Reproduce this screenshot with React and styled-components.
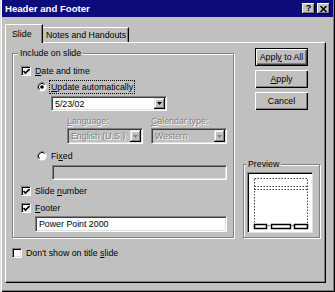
import React from "react";
import styled, { createGlobalStyle } from "styled-components";

const GlobalStyle = createGlobalStyle`
  html, body {
    margin: 0;
    padding: 0;
    background: #c0c0c0;
  }
  body {
    font-family: "Liberation Sans", Arial, sans-serif;
    font-size: 8.8px;
    color: #000;
  }
`;

const Window = styled.div`
  width: 335px;
  height: 292px;
  box-sizing: border-box;
  background: #c0c0c0;
  padding: 0 2px 2px 2px;
  display: flex;
  flex-direction: column;
  box-shadow: inset 1px 0 0 #dfdfdf, inset 2px 0 0 #fff, inset -1px -1px 0 #000,
    inset -2px -2px 0 #808080;
`;

const TitleBar = styled.div`
  height: 17px;
  flex: none;
  background: #0c0c7c;
  display: flex;
  align-items: center;
  justify-content: space-between;
  padding: 0 3px 0 3px;
`;

const TitleText = styled.div`
  color: #fff;
  font-weight: bold;
  font-size: 9.6px;
`;

const CaptionButtons = styled.div`
  display: flex;
  gap: 2px;
`;

const CaptionButton = styled.div`
  width: 13px;
  height: 11px;
  box-sizing: border-box;
  background: #c0c0c0;
  display: flex;
  align-items: center;
  justify-content: center;
  font-weight: bold;
  font-size: 9px;
  line-height: 1;
  box-shadow: inset -1px -1px 0 #000, inset 1px 1px 0 #fff, inset -2px -2px 0 #808080;
`;

const Body = styled.div`
  flex: 1;
  display: flex;
  flex-direction: column;
  padding: 7px 7px 7px 3px;
`;

const TabStrip = styled.div`
  display: flex;
  align-items: flex-end;
  height: 18px;
`;

const Tab = styled.div`
  box-sizing: border-box;
  width: ${(p) => p.$w}px;
  height: ${(p) => (p.$active ? "19px" : "15px")};
  margin-bottom: ${(p) => (p.$active ? "-1px" : "0")};
  padding-left: ${(p) => (p.$active ? "6px" : "3px")};
  display: flex;
  align-items: center;
  background: #c0c0c0;
  border-top: 1px solid #fff;
  border-left: ${(p) => (p.$active ? "1px solid #fff" : "none")};
  border-right: 1px solid #000;
  box-shadow: inset -1px 0 0 #808080;
  position: relative;
  z-index: ${(p) => (p.$active ? 1 : 0)};
`;

const Panel = styled.div`
  flex: 1;
  box-sizing: border-box;
  border-top: 1px solid #fff;
  border-left: 1px solid #fff;
  border-right: 1px solid #000;
  border-bottom: 1px solid #000;
  box-shadow: inset -1px -1px 0 #808080;
  padding: 5px 5px 0 6px;
  display: flex;
  flex-direction: column;
`;

const Columns = styled.div`
  display: flex;
  align-items: stretch;
`;

const Group = styled.div`
  box-sizing: border-box;
  width: ${(p) => p.$w}px;
  height: ${(p) => (p.$h ? `${p.$h}px` : "auto")};
  margin-top: ${(p) => p.$mt || 0}px;
  padding-bottom: ${(p) => p.$pb || 0}px;
  border: 1px solid #808080;
  box-shadow: 1px 1px 0 #fff, inset 1px 1px 0 #fff;
  display: flex;
  flex-direction: column;
`;

const Legend = styled.div`
  align-self: flex-start;
  height: 12px;
  line-height: 12px;
  margin: -7px 0 0 ${(p) => p.$ml}px;
  padding: 0 2px;
  background: #c0c0c0;
`;

const CheckRow = styled.div`
  display: flex;
  align-items: center;
  height: 12px;
  margin: ${(p) => p.$mt}px 0 0 ${(p) => p.$ml}px;
  gap: ${(p) => p.$gap || 4}px;
`;

const Box = styled.div`
  width: 10px;
  height: 10px;
  box-sizing: border-box;
  background: #fff;
  border: 1px solid;
  border-color: #808080 #fff #fff #808080;
  box-shadow: inset 1px 1px 0 #000, inset -1px -1px 0 #dfdfdf;
  display: flex;
  align-items: center;
  justify-content: center;
`;

const FocusLabel = styled.span`
  padding: 1px 1px;
  outline: 1px dotted #000;
  outline-offset: 0;
`;

const Field = styled.div`
  box-sizing: border-box;
  width: ${(p) => p.$w}px;
  height: ${(p) => p.$h}px;
  margin: ${(p) => p.$mt || 0}px 0 0 ${(p) => p.$ml || 0}px;
  background: ${(p) => (p.$disabled ? "#c0c0c0" : "#fff")};
  color: ${(p) => (p.$disabled ? "#808080" : "#000")};
  text-shadow: ${(p) => (p.$disabled ? "1px 1px 0 #fff" : "none")};
  border: 1px solid;
  border-color: #808080 #fff #fff #808080;
  box-shadow: inset 1px 1px 0 #404040, inset -1px -1px 0 #dfdfdf;
  padding: 1px 1px 1px 3px;
  display: flex;
  align-items: center;
  flex: none;
`;

const FieldText = styled.span`
  flex: 1;
  white-space: nowrap;
  overflow: hidden;
`;

const DropButton = styled.div`
  width: 11px;
  align-self: stretch;
  box-sizing: border-box;
  background: #c0c0c0;
  display: flex;
  align-items: center;
  justify-content: center;
  box-shadow: inset -1px -1px 0 #000, inset 1px 1px 0 #dfdfdf, inset -2px -2px 0 #808080,
    inset 2px 2px 0 #fff;
`;

const PairRow = styled.div`
  display: flex;
  gap: 8px;
  margin: ${(p) => p.$mt}px 0 0 54px;
  height: ${(p) => p.$h}px;
  align-items: center;
`;

const DisabledLabel = styled.span`
  width: 76px;
  color: #808080;
  text-shadow: 1px 1px 0 #fff;
`;

const Side = styled.div`
  width: 77px;
  margin-left: 9px;
  display: flex;
  flex-direction: column;
  align-items: center;
  gap: 4px;
`;

const Button = styled.div`
  width: 53px;
  height: 18px;
  box-sizing: border-box;
  display: flex;
  align-items: center;
  justify-content: center;
  background: #c0c0c0;
  border: ${(p) => (p.$default ? "1px solid #000" : "none")};
  box-shadow: ${(p) =>
    p.$default
      ? "inset 1px 1px 0 #fff, inset -1px -1px 0 #404040, inset -2px -2px 0 #808080"
      : "inset 1px 1px 0 #fff, inset -1px -1px 0 #000, inset -2px -2px 0 #808080"};
`;

const PreviewGroup = styled(Group)`
  margin-top: auto;
`;

const Screen = styled.div`
  width: 66px;
  height: 61px;
  box-sizing: border-box;
  margin: 2px 0 0 3px;
  background: #fff;
  border: 1px solid;
  border-color: #808080 #dfdfdf #dfdfdf #808080;
  box-shadow: inset 1px 1px 0 #000;
  display: flex;
`;

const BottomRow = styled(CheckRow)`
  margin-top: 9px;
`;

const Check = () => (
  <svg width="7" height="7" viewBox="0 0 7 7">
    <path d="M0.5 3 L2.5 5 L6.5 1" stroke="#000" strokeWidth="1.6" fill="none" />
  </svg>
);

const Radio = ({ checked }) => (
  <svg width="10" height="10" viewBox="0 0 10 10">
    <circle cx="5" cy="5" r="4.5" fill="#fff" />
    <path d="M8.2 1.8 A4.5 4.5 0 0 0 1.8 8.2" stroke="#808080" strokeWidth="1" fill="none" />
    <path d="M7.5 2.5 A3.5 3.5 0 0 0 2.5 7.5" stroke="#000" strokeWidth="1" fill="none" />
    {checked && <circle cx="5" cy="5" r="1.8" fill="#000" />}
  </svg>
);

const Arrow = ({ color = "#000" }) => (
  <svg width="5" height="3" viewBox="0 0 5 3">
    <path d="M0 0 H5 L2.5 3 Z" fill={color} />
  </svg>
);

const Combo = ({ w, h, value, disabled, mt, ml }) => (
  <Field $w={w} $h={h} $disabled={disabled} $mt={mt} $ml={ml}>
    <FieldText>{value}</FieldText>
    <DropButton>
      <Arrow color={disabled ? "#808080" : "#000"} />
    </DropButton>
  </Field>
);

const SlideSketch = () => (
  <svg width="64" height="59" viewBox="0 0 64 59">
    <g stroke="#404040" strokeWidth="1" strokeDasharray="1.5 1.5" fill="none">
      <rect x="6.5" y="5.5" width="53" height="47" />
      <line x1="6.5" y1="13.5" x2="59.5" y2="13.5" />
      <line x1="6.5" y1="16.5" x2="59.5" y2="16.5" />
    </g>
    <g stroke="#000" strokeWidth="1.5" fill="#fff">
      <rect x="6.5" y="51.5" width="12" height="4" />
      <rect x="23.5" y="51.5" width="19" height="4" />
      <rect x="46.5" y="51.5" width="13" height="4" />
    </g>
  </svg>
);

export default function App() {
  return (
    <>
      <GlobalStyle />
      <Window>
        <TitleBar>
          <TitleText>Header and Footer</TitleText>
          <CaptionButtons>
            <CaptionButton>?</CaptionButton>
            <CaptionButton>
              <svg width="7" height="6" viewBox="0 0 7 6">
                <path d="M0.5 0 L6.5 6 M6.5 0 L0.5 6" stroke="#000" strokeWidth="1.5" />
              </svg>
            </CaptionButton>
          </CaptionButtons>
        </TitleBar>
        <Body>
          <TabStrip>
            <Tab $active $w={38}>Slide</Tab>
            <Tab $w={86}>Notes and Handouts</Tab>
          </TabStrip>
          <Panel>
            <Columns>
              <Group $w={222} $mt={5} $pb={5}>
                <Legend $ml={5}>Include on slide</Legend>
                <CheckRow $mt={6} $ml={8}>
                  <Box>
                    <Check />
                  </Box>
                  <span>
                    <u>D</u>ate and time
                  </span>
                </CheckRow>
                <CheckRow $mt={4} $ml={24} $gap={3}>
                  <Radio checked />
                  <FocusLabel>
                    <u>U</u>pdate automatically
                  </FocusLabel>
                </CheckRow>
                <Combo w={116} h={15} mt={3} ml={38} value="5/23/02" />
                <PairRow $mt={5} $h={10}>
                  <DisabledLabel>
                    <u>L</u>anguage:
                  </DisabledLabel>
                  <DisabledLabel>
                    <u>C</u>alendar type:
                  </DisabledLabel>
                </PairRow>
                <PairRow $mt={2} $h={16}>
                  <Combo w={76} h={16} value="English (U.S.)" disabled />
                  <Combo w={76} h={16} value="Western" disabled />
                </PairRow>
                <CheckRow $mt={6} $ml={24}>
                  <Radio />
                  <span>
                    Fi<u>x</u>ed
                  </span>
                </CheckRow>
                <Field $w={175} $h={15} $mt={3} $ml={39} $disabled />
                <CheckRow $mt={5} $ml={8}>
                  <Box>
                    <Check />
                  </Box>
                  <span>
                    Slide <u>n</u>umber
                  </span>
                </CheckRow>
                <CheckRow $mt={5} $ml={8}>
                  <Box>
                    <Check />
                  </Box>
                  <span>
                    <u>F</u>ooter
                  </span>
                </CheckRow>
                <Field $w={192} $h={16} $mt={2} $ml={22}>
                  <FieldText>Power Point 2000</FieldText>
                </Field>
              </Group>
              <Side>
                <Button $default>
                  <span>
                    Appl<u>y</u> to All
                  </span>
                </Button>
                <Button>
                  <span>
                    <u>A</u>pply
                  </span>
                </Button>
                <Button>Cancel</Button>
                <PreviewGroup $w={77} $h={74}>
                  <Legend $ml={2}>Preview</Legend>
                  <Screen>
                    <SlideSketch />
                  </Screen>
                </PreviewGroup>
              </Side>
            </Columns>
            <BottomRow $ml={9}>
              <Box />
              <span>
                Don't show on title <u>s</u>lide
              </span>
            </BottomRow>
          </Panel>
        </Body>
      </Window>
    </>
  );
}
